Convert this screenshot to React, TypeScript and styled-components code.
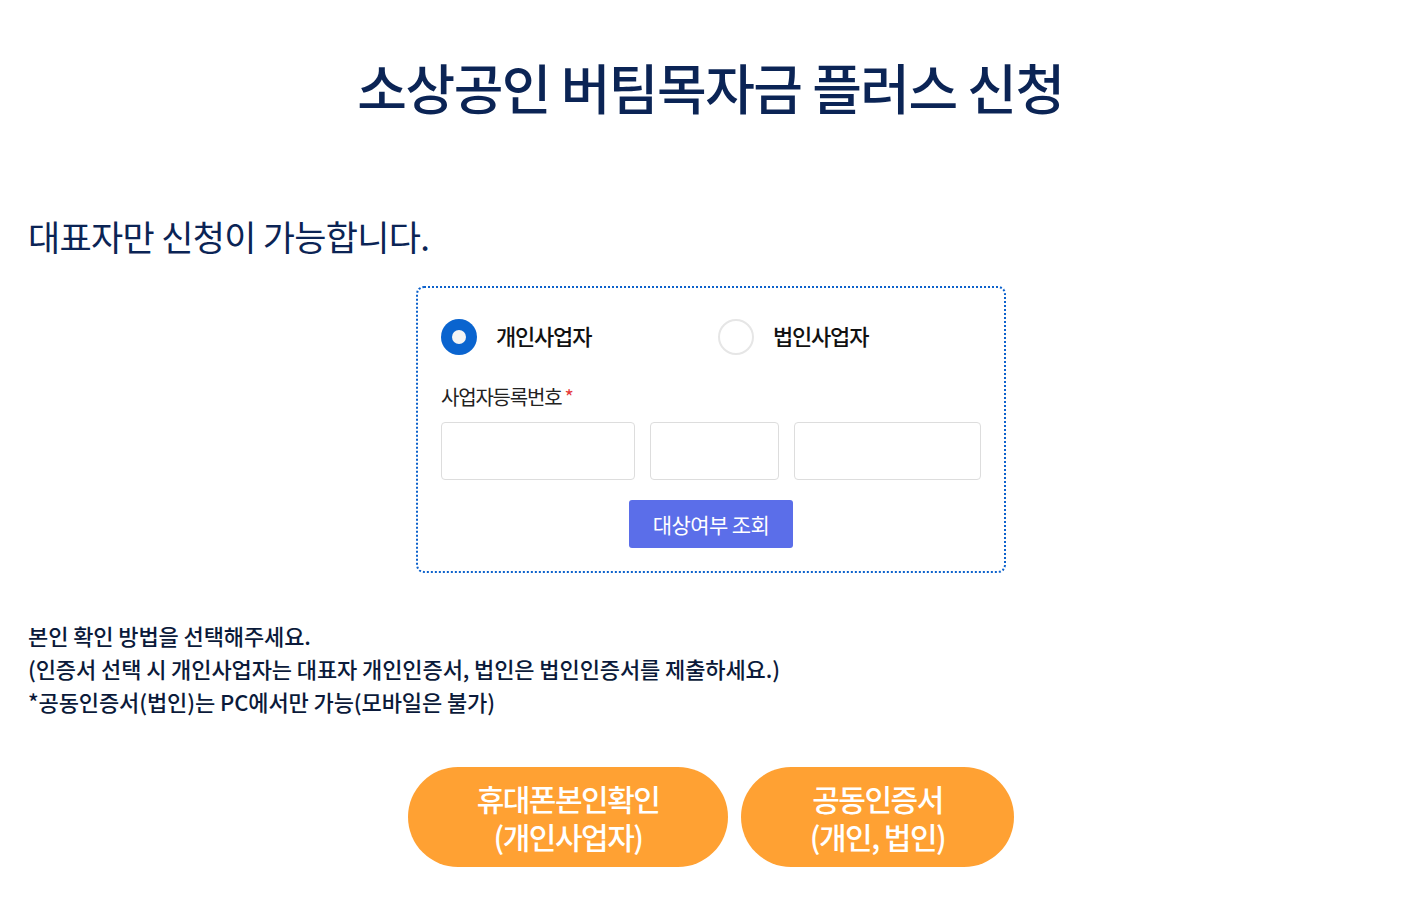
import * as React from "react";
import styled, { createGlobalStyle } from "styled-components";

const GlobalStyle = createGlobalStyle`
  html, body {
    margin: 0;
    padding: 0;
    background: #ffffff;
  }
  body {
    font-family: "Noto Sans CJK KR", "Noto Sans", sans-serif;
  }
`;

const Page = styled.div`
  width: 1417px;
  min-height: 911px;
  padding: 49px 28px 0;
  box-sizing: border-box;
`;

const Title = styled.h1`
  margin: 0;
  text-align: center;
  color: #0b2455;
  font-size: 54px;
  font-weight: 500;
  letter-spacing: -1.5px;
  line-height: 76px;
  padding-left: 4px;
`;

const Notice = styled.div`
  margin-top: 87px;
  color: #0b2455;
  font-size: 35px;
  font-weight: 400;
  letter-spacing: -0.7px;
  line-height: 48px;
`;

const FormBox = styled.div`
  width: 590px;
  margin: 26px 0 0 388px;
  box-sizing: border-box;
  border: 2px dotted #0d62cc;
  border-radius: 8px;
  padding: 31px 23px 23px;
`;

const RadioRow = styled.div`
  display: flex;
`;

const RadioOption = styled.label`
  flex: 0 0 277px;
  display: flex;
  align-items: center;
  gap: 19px;
  cursor: pointer;
`;

const RadioCircle = styled.span<{ $checked?: boolean }>`
  width: 36px;
  height: 36px;
  border-radius: 50%;
  box-sizing: border-box;
  display: flex;
  align-items: center;
  justify-content: center;
  background: ${(p) => (p.$checked ? "#0a64cf" : "#ffffff")};
  border: ${(p) => (p.$checked ? "none" : "2px solid #e6e6e6")};

  &::after {
    content: "";
    width: 14px;
    height: 14px;
    border-radius: 50%;
    background: #f4f4f4;
    display: ${(p) => (p.$checked ? "block" : "none")};
  }
`;

const RadioLabel = styled.span`
  font-size: 22px;
  font-weight: 500;
  color: #111111;
  letter-spacing: -1.2px;
  margin-top: -4px;
`;

const FieldLabel = styled.div`
  margin-top: 29px;
  font-size: 20px;
  color: #222222;
  letter-spacing: -1.2px;
  line-height: 26px;
`;

const Required = styled.span`
  color: #e53a3a;
  margin-left: 3px;
`;

const InputRow = styled.div`
  display: grid;
  grid-template-columns: 194px 129px 187px;
  gap: 15px;
  margin-top: 12px;
`;

const NumberInput = styled.input`
  height: 58px;
  box-sizing: border-box;
  border: 1px solid #dddddd;
  border-radius: 4px;
  outline: none;
  font-size: 18px;
  padding: 0 12px;
`;

const CheckRow = styled.div`
  display: flex;
  justify-content: center;
  margin-top: 20px;
`;

const CheckButton = styled.button`
  width: 164px;
  height: 48px;
  border: none;
  border-radius: 3px;
  background: #5b6ee9;
  color: #ffffff;
  font-family: "Noto Sans CJK KR", sans-serif;
  font-size: 21px;
  letter-spacing: -0.6px;
  cursor: pointer;
`;

const Guide = styled.div`
  margin-top: 46px;
  color: #0b1a3a;
  font-size: 22px;
  font-weight: 500;
  letter-spacing: -0.1px;
  line-height: 33px;
`;

const AuthRow = styled.div`
  display: flex;
  justify-content: center;
  gap: 13px;
  margin-top: 49px;
  padding-left: 5px;
`;

const AuthButton = styled.button<{ $width: number }>`
  width: ${(p) => p.$width}px;
  height: 100px;
  border: none;
  border-radius: 50px;
  background: #ffa133;
  color: #ffffff;
  font-family: "Noto Sans CJK KR", sans-serif;
  font-size: 30px;
  font-weight: 500;
  line-height: 38px;
  letter-spacing: -1.5px;
  cursor: pointer;
`;

const App: React.FC = () => {
  const [type, setType] = React.useState<"personal" | "corp">("personal");

  return (
    <>
      <GlobalStyle />
      <Page>
        <Title>소상공인 버팀목자금 플러스 신청</Title>
        <Notice>대표자만 신청이 가능합니다.</Notice>

        <FormBox>
          <RadioRow>
            <RadioOption onClick={() => setType("personal")}>
              <RadioCircle $checked={type === "personal"} />
              <RadioLabel>개인사업자</RadioLabel>
            </RadioOption>
            <RadioOption onClick={() => setType("corp")}>
              <RadioCircle $checked={type === "corp"} />
              <RadioLabel>법인사업자</RadioLabel>
            </RadioOption>
          </RadioRow>

          <FieldLabel>
            사업자등록번호<Required>*</Required>
          </FieldLabel>
          <InputRow>
            <NumberInput />
            <NumberInput />
            <NumberInput />
          </InputRow>

          <CheckRow>
            <CheckButton>대상여부 조회</CheckButton>
          </CheckRow>
        </FormBox>

        <Guide>
          본인 확인 방법을 선택해주세요.
          <br />
          (인증서 선택 시 개인사업자는 대표자 개인인증서, 법인은 법인인증서를 제출하세요.)
          <br />
          *공동인증서(법인)는 PC에서만 가능(모바일은 불가)
        </Guide>

        <AuthRow>
          <AuthButton $width={320}>
            휴대폰본인확인
            <br />
            (개인사업자)
          </AuthButton>
          <AuthButton $width={273}>
            공동인증서
            <br />
            (개인, 법인)
          </AuthButton>
        </AuthRow>
      </Page>
    </>
  );
};

export default App;
